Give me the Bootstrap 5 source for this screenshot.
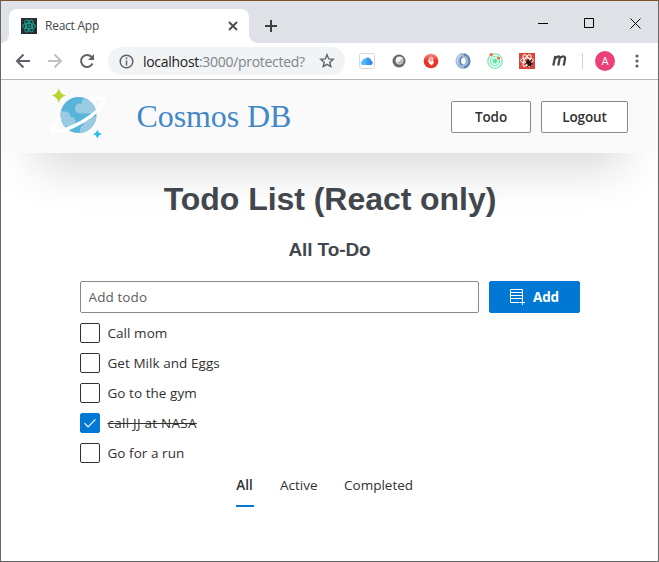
<!DOCTYPE html>
<html lang="en">
<head>
<meta charset="utf-8">
<title>React App</title>
<link rel="stylesheet" href="https://cdn.jsdelivr.net/npm/bootstrap@5.3.0/dist/css/bootstrap.min.css">
<style>
  body { font-family: "Open Sans", "Noto Sans", sans-serif; font-size: 13.5px; color: #323130; background: #fff; }
  svg { display: block; flex: none; }
  .window { width: 659px; height: 562px; border: 1px solid #666; border-top-color: #7a5428; }
  .tabstrip { height: 42px; background: #dee1e6; padding: 8px 0 0 8px; }
  .tab { width: 240px; height: 34px; border-radius: 8px 8px 0 0; background: #fff; padding: 0 10px 0 12px; position: relative; }
  .tab::before, .tab::after { content: ""; position: absolute; bottom: 0; width: 8px; height: 8px; }
  .tab::before { left: -8px; background: radial-gradient(circle at 0 0, #dee1e6 7.5px, #fff 8px); }
  .tab::after { right: -8px; background: radial-gradient(circle at 100% 0, #dee1e6 7.5px, #fff 8px); }
  .tab-title { font-size: 12px; color: #45494d; letter-spacing: -.25px; margin-left: 8px; }
  .newtab { margin: 11px 0 0 16px; }
  .controls { margin: 9px 17px 0 auto; gap: 35px; }
  .toolbar { height: 37px; background: #fff; border-bottom: 1px solid #b6b6b6; padding-left: 14px; }
  .address { width: 237px; height: 28px; border-radius: 14px; background: #f1f3f4; margin-left: 13px; padding: 0 10px 0 11px; }
  .url { font-size: 14px; letter-spacing: -.3px; color: #80868b; margin-left: 9px; }
  .url span { color: #202124; }
  .extensions { gap: 16px; margin-left: 14px; }
  .divider { width: 1px; height: 16px; background: #cfd1d4; margin-left: 15px; }
  .avatar { width: 20px; height: 20px; background: #ec407a; color: #fff; font: 11px Roboto, sans-serif; margin-left: 12px; margin-right: 20px; }
  .site-header { height: 73px; background: #fafafa; padding: 0 30px 0 48px; position: relative; }
  .site-header::after { content: ""; position: absolute; z-index: -1; inset: -60px 0 0; box-shadow: 0 49px 48px -35px rgba(0,0,0,.165); }
  .site-name { font: 32px "Liberation Serif", serif; letter-spacing: -.1px; color: #4288c8; margin-left: 27.500px; }
  .fbtn { height: 32px; border: 1px solid #8a8886; border-radius: 2px; padding: 0; font-size: 13.5px; font-weight: 600; line-height: 30px; color: #323130; background: #fff; letter-spacing: -.1px; }
  .btn-todo { width: 80px; }
  .btn-logout { width: 87px; }
  h1, h2 { font-family: "Liberation Sans", Arial, sans-serif; font-weight: 700; color: #41474d; }
  h1 { font-size: 32px; line-height: 38px; margin: 27px 0 0 1px; letter-spacing: -.05px; }
  h2 { font-size: 19px; line-height: 24px; margin: 20px 0 0; letter-spacing: -.1px; }
  .todo-area { width: 500px; margin-top: 19px; }
  .entry { height: 32px; border: 1px solid #8a8886; border-radius: 2px; padding: 0 8px; font-size: 13.5px; letter-spacing: .1px; box-shadow: none; }
  .entry::placeholder { color: #605e5c; }
  .btn-add { width: 91px; background: #0078d4; border-color: #0078d4; color: #fff; font-weight: 700; gap: 8px; }
  .todo-items { margin-top: 10px; gap: 10px; }
  .todo-items li { height: 20px; line-height: 20px; gap: 8px; letter-spacing: .05px; }
  .finished { letter-spacing: .25px; text-decoration: line-through; }
  .box { width: 20px; height: 20px; border: 1px solid #323130; border-radius: 2px; }
  .box.done { background: #0078d4; border-color: #0078d4; }
  .filters { gap: 26.500px; margin-left: 156px; margin-top: 6px; }
  .filters a { color: #323130; text-decoration: none; height: 38px; line-height: 33px; }
  .filters a.active { font-weight: 600; border-bottom: 2px solid #0078d4; width: 18px; text-align: center; }
</style>
</head>
<body class="m-0 overflow-hidden">
<div class="window d-flex flex-column">
  <div class="tabstrip d-flex align-items-start">
    <div class="tab d-flex align-items-center">
      <svg width="16" height="16" viewBox="0 0 16 16" fill="none" stroke="#18a98c"><path fill="#292b35" stroke="none" d="M0 0h16v16H0z"/><ellipse cx="8" cy="8" rx="6.5" ry="2.7"/><ellipse cx="8" cy="8" rx="6.5" ry="2.7" transform="rotate(60 8 8)"/><ellipse cx="8" cy="8" rx="6.5" ry="2.7" transform="rotate(120 8 8)"/><circle cx="8" cy="8" r="1"/></svg>
      <span class="tab-title">React App</span>
      <svg class="ms-auto" width="12" height="12" viewBox="0 0 12 12" stroke="#45494d" stroke-width="1.8"><path d="M2 2l8 8M10 2l-8 8"/></svg>
    </div>
    <svg class="newtab" width="12" height="12" viewBox="0 0 12 12" stroke="#3c4043" stroke-width="2"><path d="M6 0v12M0 6h12"/></svg>
    <div class="controls d-flex">
      <svg width="11" height="11" viewBox="0 0 11 11" shape-rendering="crispEdges"><path stroke="#000" d="M0 5.500h10"/></svg>
      <svg width="11" height="11" viewBox="0 0 11 11"><path fill="none" stroke="#000" d="M.5.5h9v9h-9z"/></svg>
      <svg width="11" height="11" viewBox="0 0 11 11"><path stroke="#000" d="M.5.5l10 10M10.500.5l-10 10"/></svg>
    </div>
  </div>

  <div class="toolbar d-flex align-items-center">
    <svg width="16" height="16" viewBox="0 0 16 16" fill="none" stroke="#5f6368" stroke-width="2"><path d="M15 8H2.500M8.500 1.500L2 8l6.500 6.500"/></svg>
    <svg class="ms-3" width="16" height="16" viewBox="0 0 16 16" fill="none" stroke="#bdc0c3" stroke-width="2"><path d="M1 8h12.500M7.500 1.500L14 8l-6.500 6.500"/></svg>
    <svg class="ms-3" width="16" height="16" viewBox="0 0 16 16" fill="none" stroke="#5f6368" stroke-width="2"><path d="M13.500 10.500A6 6 0 1 1 12.400 3.800L14 5.500"/><path fill="#5f6368" stroke="none" d="M15 1v6H9z"/></svg>
    <div class="address d-flex align-items-center">
      <svg width="15" height="15" viewBox="0 0 15 15" fill="none" stroke="#5f6368" stroke-width="1.5"><circle cx="7.500" cy="7.500" r="6.300"/><path d="M7.500 6.500v5M7.500 3.500v1.700"/></svg>
      <span class="url"><span>localhost</span>:3000/protected?</span>
      <svg class="ms-auto" width="16" height="16" viewBox="0 0 16 16" fill="none" stroke="#5f6368" stroke-width="1.400"><path d="M8 1.800l1.700 4.100 4.500.4-3.400 2.900 1 4.400L8 11.300l-3.800 2.300 1-4.400-3.400-2.900 4.500-.4z"/></svg>
    </div>
    <div class="extensions d-flex align-items-center">
      <svg width="16" height="16" viewBox="0 0 16 16"><defs><linearGradient id="cloud" x2="1"><stop stop-color="#62d0fa"/><stop offset="1" stop-color="#2479ee"/></linearGradient></defs><rect x=".5" y=".5" width="15" height="15" rx="2" fill="#fff" stroke="#d9d9d9"/><path fill="url(#cloud)" d="M3.500 12a2.200 2.200 0 0 1-.2-4.300A2.300 2.300 0 0 1 6 5.900a3.500 3.500 0 0 1 6.200 1.900A2.200 2.200 0 0 1 12 12z"/></svg>
      <svg width="16" height="16" viewBox="0 0 16 16"><circle cx="8" cy="8" r="6.500" fill="#686868"/><circle cx="8.500" cy="7.500" r="3.900" fill="#f4f4f4"/><path fill="#b5b5b5" d="M5 9q4 1 6-4 3 5-2 6-3 0-4-2z"/></svg>
      <svg width="16" height="16" viewBox="0 0 16 16"><defs><linearGradient id="stop" x2="0" y2="1"><stop stop-color="#f2908a"/><stop offset=".5" stop-color="#e62e22"/><stop offset="1" stop-color="#ee3b26"/></linearGradient></defs><circle cx="8" cy="8" r="7.300" fill="url(#stop)"/><path fill="none" stroke="#fff" stroke-linecap="round" d="M6.300 5v4M8 4v5M9.700 5v4M5 7.500L7 10.500"/><path fill="#fff" d="M6 8.500h4.500l.8-.8-1.200 3.300-1.300 1.200L6.500 11z"/></svg>
      <svg width="16" height="16" viewBox="0 0 16 16" fill="none"><ellipse cx="8" cy="8" rx="5" ry="5.500" stroke="#9db9d8" stroke-width="5"/><path stroke="#5e83ae" stroke-width="2" d="M9 1.500a6.600 6.600 0 0 1 0 13M7 4q-3 4 0 8"/><path stroke="#c5d5e8" stroke-width="1.500" d="M6 2a6.500 6.500 0 0 0-3 9"/><ellipse cx="8.200" cy="8" rx="2" ry="3.200" fill="#fff"/></svg>
      <svg width="16" height="16" viewBox="0 0 16 16" fill="none" stroke="#72ecb0" stroke-width="1.300"><circle cx="8" cy="8" r="7.200"/><circle cx="8" cy="8" r="4.600"/><circle cx="8" cy="8" r="2" fill="#59dda0"/><g fill="#f4693a" stroke="none"><circle cx="4.200" cy="1.700" r="1.600"/><circle cx="11.500" cy="5" r="1.600"/></g></svg>
      <svg width="16" height="16" viewBox="0 0 16 16" fill="none" stroke="#fff"><path fill="#d9473a" stroke="none" d="M0 0h16v16H0z"/><ellipse cx="8" cy="7.500" rx="6.500" ry="2.500"/><ellipse cx="8" cy="7.500" rx="6.500" ry="2.500" transform="rotate(60 8 7.500)"/><ellipse cx="8" cy="7.500" rx="6.500" ry="2.500" transform="rotate(120 8 7.500)"/><path stroke="#301512" d="M6 11l7-4M8 13.500l6-3M9 6l3 8"/><ellipse cx="10" cy="10" rx="2.300" ry="3.200" transform="rotate(-40 10 10)" fill="#301512" stroke="none"/></svg>
      <svg width="16" height="16" viewBox="0 0 16 16" fill="none" stroke="#474747" stroke-width="2.300"><path d="M2.300 12.500L4.300 3M3.900 5.600Q7.300 2.500 8.500 4q.5.700-.1 2.700L7.200 12.500M8.200 5.600q3.300-3.200 5.400-1.700.9.700.3 2.700L12.700 12.500"/></svg>
    </div>
    <div class="divider"></div>
    <div class="avatar rounded-circle d-flex align-items-center justify-content-center">A</div>
    <svg width="4" height="14" viewBox="0 0 4 14" fill="#5f6368"><circle cx="2" cy="2" r="1.600"/><circle cx="2" cy="7" r="1.600"/><circle cx="2" cy="12" r="1.600"/></svg>
  </div>

  <header class="site-header d-flex align-items-center">
    <svg width="60" height="60" viewBox="0 0 60 60"><defs><clipPath id="planet"><circle cx="29.500" cy="28" r="18"/></clipPath></defs>
      <circle cx="29.500" cy="28" r="18" fill="#59b4d9"/>
      <g clip-path="url(#planet)" fill="#9bcae3"><path d="M31 26.500a5 5 0 0 1 0-10q1-.2 1.700.2A6 6 0 0 1 39 10h12v16.500zM10 24.500h7q5 1 4.500 5.500 5 0 5 5 0 4.500-5 4.500H10zM52 29q-11 0-12 4-6 0-5 5-5 1-4 9h21z"/></g>
      <path fill="none" stroke="#fff" stroke-width="3.300" stroke-linecap="round" d="M42.500 13.300c6.500-2.800 12-2.800 12.500.2.700 4.500-9.500 14.200-22.600 21.700C19.500 42.500 6 46.500 4 43.500c-1.300-2.400 2-7.300 6.500-11.300"/>
      <path fill="#b8d432" d="M9.800 1.200q1.300 6.100 7.400 7.400-6.100 1.300-7.400 7.400-1.300-6.100-7.400-7.400 6.100-1.300 7.400-7.400z"/>
      <path fill="#2bb9ee" d="M48.400 42.500q.9 3.700 4.600 4.600-3.700.9-4.600 4.600-.9-3.700-4.600-4.600 3.700-.9 4.600-4.600z"/></svg>
    <div class="site-name">Cosmos DB</div>
    <div class="d-flex ms-auto" style="gap:10px">
      <button class="btn fbtn btn-todo">Todo</button>
      <button class="btn fbtn btn-logout">Logout</button>
    </div>
  </header>

  <main class="d-flex flex-column align-items-center">
    <h1>Todo List (React only)</h1>
    <h2>All To-Do</h2>
    <div class="todo-area">
      <div class="d-flex" style="gap:10px">
        <input class="form-control entry" placeholder="Add todo">
        <button class="btn fbtn btn-add d-flex flex-shrink-0 align-items-center justify-content-center">
          <svg width="16" height="16" viewBox="0 0 16 16" fill="none" stroke="#fff"><path d="M1.500.5h12v11M1.500.5v13h9M1.500 3.500h12M1.500 6.500h12M1.500 9.500h12M13.500 11v5M11 13.500h5"/></svg>Add
        </button>
      </div>
      <ul class="todo-items list-unstyled d-flex flex-column mb-0">
        <li class="d-flex"><span class="box"></span>Call mom</li>
        <li class="d-flex"><span class="box"></span>Get Milk and Eggs</li>
        <li class="d-flex"><span class="box"></span>Go to the gym</li>
        <li class="d-flex"><span class="box done"><svg width="18" height="18" viewBox="0 0 18 18" fill="none" stroke="#fff" stroke-width="1.200"><path d="M3.500 9.200l3.600 3.600 7.400-7.400"/></svg></span><span class="finished">call JJ at NASA</span></li>
        <li class="d-flex"><span class="box"></span>Go for a run</li>
      </ul>
      <nav class="filters d-flex">
        <a href="#" class="active">All</a>
        <a href="#">Active</a>
        <a href="#">Completed</a>
      </nav>
    </div>
  </main>
</div>
<script src="https://cdn.jsdelivr.net/npm/bootstrap@5.3.0/dist/js/bootstrap.bundle.min.js"></script>
</body>
</html>
